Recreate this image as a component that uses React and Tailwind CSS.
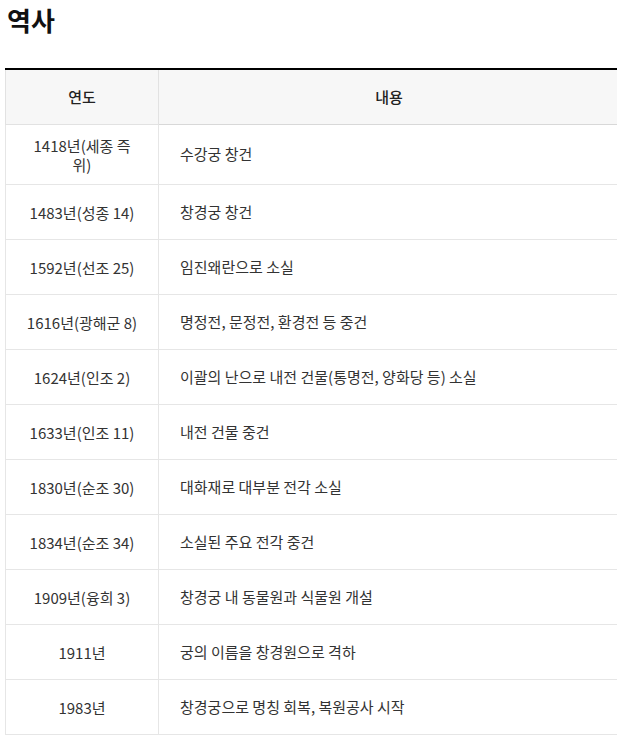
import React from "react";

const rows = [
  [["1418년(세종 즉", "위)"], "수강궁 창건"],
  [["1483년(성종 14)"], "창경궁 창건"],
  [["1592년(선조 25)"], "임진왜란으로 소실"],
  [["1616년(광해군 8)"], "명정전, 문정전, 환경전 등 중건"],
  [["1624년(인조 2)"], "이괄의 난으로 내전 건물(통명전, 양화당 등) 소실"],
  [["1633년(인조 11)"], "내전 건물 중건"],
  [["1830년(순조 30)"], "대화재로 대부분 전각 소실"],
  [["1834년(순조 34)"], "소실된 주요 전각 중건"],
  [["1909년(융희 3)"], "창경궁 내 동물원과 식물원 개설"],
  [["1911년"], "궁의 이름을 창경원으로 격하"],
  [["1983년"], "창경궁으로 명칭 회복, 복원공사 시작"],
];

function App() {
  return (
    <div
      className="w-[617px] h-[740px] overflow-hidden bg-white"
      style={{ fontFamily: '"Noto Sans CJK KR", "Noto Sans", sans-serif' }}
    >
      <h2 className="pl-[7px] pt-[2px] h-[68px] text-[26px] font-bold text-[#111] leading-[36px]">
        역사
      </h2>
      <div className="pl-[5px]">
        <table className="w-[614px] border-collapse border-t-2 border-t-black border-b border-b-[#aaa] table-fixed text-[15px] text-[#333]">
          <colgroup>
            <col className="w-[153px]" />
            <col />
          </colgroup>
          <thead>
            <tr className="bg-[#f7f7f7] h-[55px]">
              <th className="border-l border-r border-b border-[#e2e2e2] font-medium text-[#222] text-center">
                연도
              </th>
              <th className="border-b border-[#d8d8d8] font-medium text-[#222] text-center">
                내용
              </th>
            </tr>
          </thead>
          <tbody>
            {rows.map(([year, text]) => (
              <tr key={year[0]} className="h-[55px]">
                <td className="border-l border-r border-b border-[#e6e6e6] px-2 pt-[11px] pb-[10px] text-center leading-[19px] whitespace-nowrap">
                  {year.map((line) => (
                    <div key={line}>{line}</div>
                  ))}
                </td>
                <td className="border-b border-[#e6e6e6] pl-[21px] pr-4 py-[10px] leading-5">
                  {text}
                </td>
              </tr>
            ))}
          </tbody>
        </table>
      </div>
    </div>
  );
}

export default App;
